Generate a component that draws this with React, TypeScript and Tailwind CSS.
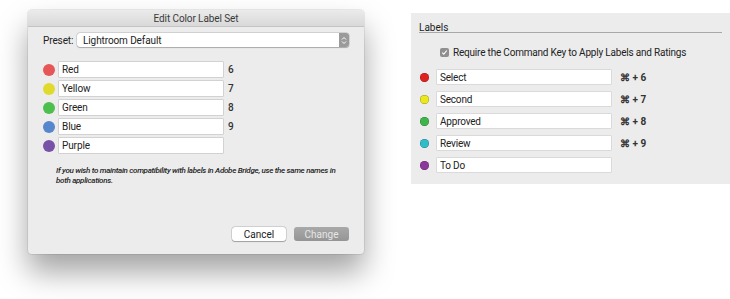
import React from "react";

const leftRows = [
  { c: "#e65656", name: "Red", n: "6" },
  { c: "#e0da2c", name: "Yellow", n: "7" },
  { c: "#4dbf4f", name: "Green", n: "8" },
  { c: "#5686cc", name: "Blue", n: "9" },
  { c: "#7852a6", name: "Purple", n: "" },
];

const rightRows = [
  { c: "#e01f1f", name: "Select", n: "6" },
  { c: "#ebe81a", name: "Second", n: "7" },
  { c: "#3eb54b", name: "Approved", n: "8" },
  { c: "#2fbdc9", name: "Review", n: "9" },
  { c: "#8c369e", name: "To Do", n: "" },
];

export default function App() {
  return (
    <div
      className="w-[730px] h-[299px] bg-white flex items-start overflow-hidden text-[#222]"
      style={{ fontFamily: 'Roboto, "Liberation Sans", Arial, sans-serif' }}
    >
      {/* Dialog */}
      <div className="ml-[28px] mt-[10px] w-[336px] h-[244px] bg-[#ececec] rounded-[4px] flex flex-col shadow-[0_18px_30px_rgba(0,0,0,0.36),0_0_0_1px_rgba(0,0,0,0.07)]">
        <div className="h-[17px] rounded-t-[4px] bg-gradient-to-b from-[#ebebeb] to-[#d9d9d9] border-b border-[#c4c4c4] flex items-center justify-center text-[10px] text-[#3a3a3a] tracking-[-0.1px]">
          Edit Color Label Set
        </div>
        <div className="flex-1 flex flex-col px-[15px] pt-[6px] pb-[13px]">
          <div className="flex items-center h-[14px]">
            <span className="text-[10px] text-[#222] tracking-[-0.1px]">Preset:</span>
            <div className="ml-auto w-[272px] h-[14px] bg-white rounded-[3px] shadow-[0_0_0_0.5px_rgba(0,0,0,0.2),0_0.5px_1px_rgba(0,0,0,0.2)] flex items-center">
              <span className="pl-[6px] text-[10px] text-[#222] flex-1 tracking-[-0.1px]">Lightroom Default</span>
              <div className="w-[10px] h-[14px] rounded-r-[3px] bg-[#9a9a9a] flex items-center justify-center">
                <svg width="6" height="9" viewBox="0 0 6 9">
                  <path d="M1 3.5 L3 1.5 L5 3.5 M1 5.5 L3 7.5 L5 5.5" stroke="#fff" strokeWidth="1" fill="none" />
                </svg>
              </div>
            </div>
          </div>
          <div className="mt-[15px] flex flex-col gap-[4px]">
            {leftRows.map((r) => (
              <div key={r.name} className="flex items-center h-[15px]">
                <div className="w-[12px] h-[12px] rounded-full" style={{ backgroundColor: r.c }} />
                <div className="ml-[4px] w-[164px] h-[15px] bg-white shadow-[0_0_0_0.5px_rgba(0,0,0,0.22)] flex items-center pl-[3px] text-[10px] text-[#222] tracking-[-0.1px]">
                  {r.name}
                </div>
                <span className="ml-[5px] text-[10px] font-medium text-[#333]">{r.n}</span>
              </div>
            ))}
          </div>
          <p className="mt-[13px] ml-[13px] text-[8px] leading-[10px] italic font-medium text-[#222] tracking-[-0.3px] whitespace-nowrap">
            If you wish to maintain compatibility with labels in Adobe Bridge, use the same names in
            <br />
            both applications.
          </p>
          <div className="mt-auto flex justify-end gap-[8px]">
            <div className="w-[54px] h-[14px] bg-white rounded-[3px] shadow-[0_0_0_0.5px_rgba(0,0,0,0.2),0_0.5px_1px_rgba(0,0,0,0.25)] flex items-center justify-center text-[10px] text-[#222]">
              Cancel
            </div>
            <div className="w-[55px] h-[14px] rounded-[3px] bg-gradient-to-b from-[#a9a9a9] to-[#959595] flex items-center justify-center text-[10px] text-[#e6e6e6]">
              Change
            </div>
          </div>
        </div>
      </div>

      {/* Right preferences panel */}
      <div className="ml-[47px] mt-[13px] w-[319px] h-[171px] bg-[#ececec] flex flex-col pl-[8px] pr-[8px]">
        <div className="pt-[7px] h-[20px] border-b border-[#a8a8a8] text-[10px] text-[#222]">Labels</div>
        <div className="mt-[13px] ml-[21px] flex items-center h-[12px]">
          <div className="w-[9px] h-[9px] rounded-[2px] bg-[#8f8f8f] flex items-center justify-center">
            <svg width="7" height="7" viewBox="0 0 7 7">
              <path d="M1.2 3.6 L2.8 5.2 L5.8 1.5" stroke="#fff" strokeWidth="1.1" fill="none" />
            </svg>
          </div>
          <span className="ml-[4px] text-[10px] text-[#222] tracking-[-0.2px]">Require the Command Key to Apply Labels and Ratings</span>
        </div>
        <div className="mt-[12px] flex flex-col gap-[8px]">
          {rightRows.map((r) => (
            <div key={r.name} className="flex items-center h-[14px]">
              <div
                className="ml-[1px] w-[9px] h-[9px] rounded-full shadow-[inset_0_0_0_0.5px_rgba(0,0,0,0.35)]"
                style={{ backgroundColor: r.c }}
              />
              <div className="ml-[8px] w-[174px] h-[14px] bg-white shadow-[0_0_0_0.5px_rgba(0,0,0,0.15)] flex items-center pl-[3px] text-[10px] text-[#222] tracking-[-0.2px]">
                {r.name}
              </div>
              {r.n && (
                <span className="ml-[9px] text-[10px] font-bold text-[#333]">⌘ + {r.n}</span>
              )}
            </div>
          ))}
        </div>
      </div>
    </div>
  );
}
